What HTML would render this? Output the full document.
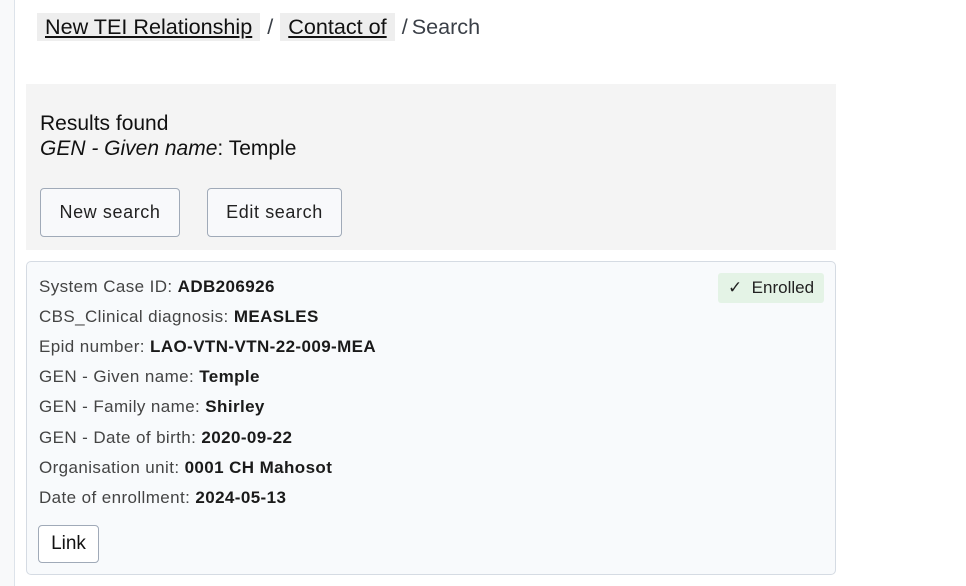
<!DOCTYPE html>
<html><head><meta charset="utf-8"><style>
body{margin:0;width:966px;height:586px;background:#fff;font-family:"Liberation Sans",sans-serif;position:relative;overflow:hidden;color:#111}
.side{position:absolute;left:0;top:0;width:14px;height:586px;background:#f8f9fa;border-right:1px solid #dde3ea}
.bc{position:absolute;top:13px;left:37px;font-size:21.6px;color:#3a3f47;white-space:nowrap}
.bc a{background:#eeeeee;color:#111;text-decoration:underline;padding:0 8px;display:inline-block;line-height:28px}
.bc span{margin:0 7px}
.panel{position:absolute;left:26px;top:84px;width:810px;height:166px;background:#f4f4f4}
.rf{position:absolute;left:14px;top:27px;font-size:21px;line-height:25px;color:#111}
.btn{position:absolute;top:104px;height:49px;border:1px solid #a0aab8;border-radius:4px;background:#f8f9fb;font-size:18px;letter-spacing:.6px;color:#222;box-sizing:border-box;display:flex;align-items:center;justify-content:center}
.card{position:absolute;left:26px;top:261px;width:810px;height:314px;box-sizing:border-box;border:1px solid #d5dbe3;border-radius:5px;background:#f8fafc}
.row{position:absolute;left:12px;font-size:17px;color:#444;white-space:nowrap;letter-spacing:.4px}
.row b{color:#1a1a1a;font-weight:bold}
.badge{position:absolute;left:691px;top:11px;width:106px;height:30px;background:#e4f3e6;border-radius:3px;font-size:17px;color:#222;display:flex;align-items:center;justify-content:center}
.link{position:absolute;left:11px;top:263px;width:61px;height:38px;box-sizing:border-box;border:1px solid #a0aab8;border-radius:4px;background:#fff;font-size:19px;display:flex;align-items:center;justify-content:center}
</style></head><body>
<div class="side"></div>
<div class="bc"><a>New TEI Relationship</a><span>/</span><a>Contact of</a><span style="margin-right:4px">/</span>Search</div>
<div class="panel">
<div class="rf">Results found<br><i>GEN - Given name</i>: Temple</div>
<div class="btn" style="left:14px;width:140px">New search</div>
<div class="btn" style="left:181px;width:135px">Edit search</div>
</div>
<div class="card">
<div class="badge">✓&nbsp;&nbsp;Enrolled</div>
<div class="row" style="top:15px">System Case ID: <b>ADB206926</b></div>
<div class="row" style="top:45px">CBS_Clinical diagnosis: <b>MEASLES</b></div>
<div class="row" style="top:75px">Epid number: <b>LAO-VTN-VTN-22-009-MEA</b></div>
<div class="row" style="top:105px">GEN - Given name: <b>Temple</b></div>
<div class="row" style="top:135px">GEN - Family name: <b>Shirley</b></div>
<div class="row" style="top:166px">GEN - Date of birth: <b>2020-09-22</b></div>
<div class="row" style="top:196px">Organisation unit: <b>0001 CH Mahosot</b></div>
<div class="row" style="top:226px">Date of enrollment: <b>2024-05-13</b></div>
<div class="link">Link</div>
</div>
</body></html>
